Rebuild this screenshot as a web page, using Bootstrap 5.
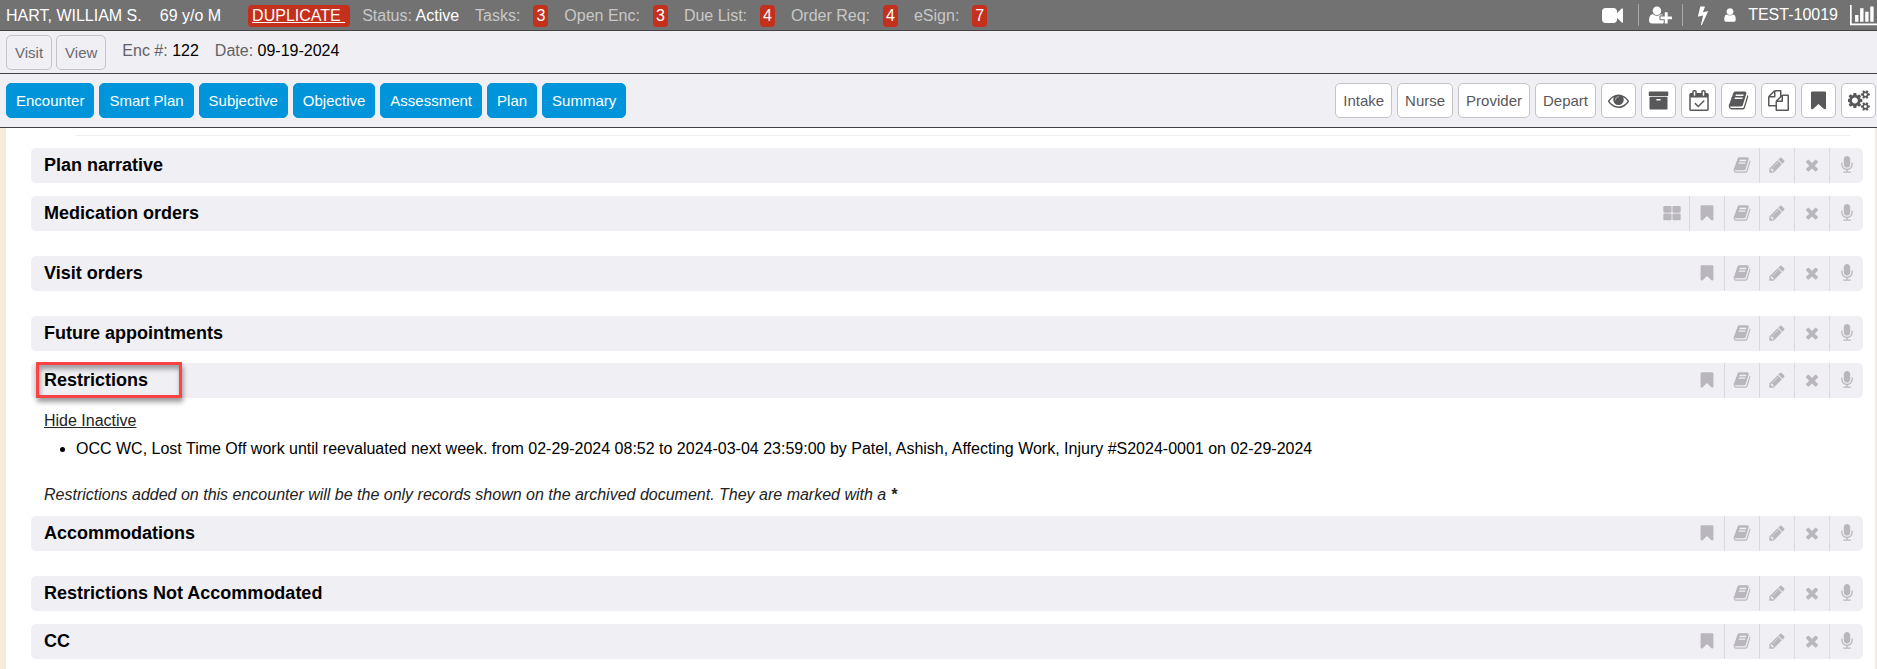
<!DOCTYPE html>
<html lang="en">
<head>
<meta charset="utf-8">
<meta name="viewport" content="width=device-width, initial-scale=1">
<title>Encounter – Plan</title>
<link href="https://cdn.jsdelivr.net/npm/bootstrap@5.3.0/dist/css/bootstrap.min.css" rel="stylesheet">
<style>
  body { font-family: "Liberation Sans", Arial, sans-serif; font-size: 16px; line-height: 22px; color: #000; background: #fff; }
  svg.fa { fill: currentColor; display: block; flex: none; }
  .s16 { height: 16px; } .s18 { height: 18px; } .s20 { height: 20px; } .s21 { height: 21px; } .s24 { height: 24px; }
  .patient-bar { background: #727272; color: #fff; height: 31px; border-bottom: 1px solid #434343; padding: 0 0 3px 6px; }
  .patient-bar .lbl { color: #c8c8c8; }
  .patient { gap: 18px; }
  .flag { background: #c3301c; color: #fff; border-radius: 4px; padding: 0 3px; }
  a.flag { padding: 0 5px 0 4px; margin-left: 9px; }
  a.flag:hover { color: #fff; }
  .counts { gap: 16px; margin-left: -6px; }
  .counts > span { display: flex; gap: 13px; }
  .tool { background: none; border: 0; color: #fff; padding: 0; }
  .split { width: 1px; height: 22px; background: #a8a8a8; margin: 0 10px 0 15px; }
  .split.flip { margin: 0 15px 0 10px; }
  .bar { background: #f0eff4; border-bottom: 1px solid #434343; }
  .visit-bar { height: 43px; padding: 4px 6px; }
  .visit-bar div { padding-top: 5px; }
  .tab-bar { min-height: 54px; padding: 9px 1px 9px 6px; gap: 5px; }
  .btn { font-size: 15px; line-height: 21px; height: 35px; border-radius: 5px; padding: 6px 8px; white-space: nowrap; }
  .btn-go { --bs-btn-color: #fff; --bs-btn-bg: #0095da; --bs-btn-border-color: #0095da; --bs-btn-hover-bg: #0082c0; --bs-btn-hover-color: #fff; padding: 6px 9px; }
  .btn-pale { --bs-btn-color: #58585a; --bs-btn-bg: #fff; --bs-btn-border-color: #c4c4c8; --bs-btn-hover-bg: #eee; padding: 4px 7px; }
  .btn-clear { --bs-btn-bg: transparent; padding: 5px 8px; color: #6a6a6e; }
  .btn-icon { width: 35px; padding: 0; display: flex; align-items: center; justify-content: center; }
  .muted { color: #626266; }
  .sheet { border-left: 6px solid #f5ecdc; border-right: 2px solid #f5ecdc; padding: 7px 12px 8px 25px; }
  .rule { height: 1px; background: #efeff1; margin: 0 13px 12px 45px; }
  .section-head { background: #f0eff4; border-radius: 5px; height: 35px; padding-left: 13px; margin-bottom: 13px; position: relative; }
  .section-head h2 { font-size: 18px; line-height: 20px; font-weight: 700; margin: 0 auto 2px 0; }
  .section-head button { width: 35px; height: 35px; border: 0; border-left: 1px solid #dad9dd; background: none; color: #b9b7bd; padding: 0 0 1px; display: flex; align-items: center; justify-content: center; }
  .section-head button:last-of-type { width: 34px; }
  .section-head h2 + button { border-left-color: transparent; }
  .gap-after { margin-bottom: 25px; }
  .tight { margin-bottom: 12px; }
  .highlight { position: absolute; left: 5px; top: -1px; width: 146px; height: 36px; border: 3px solid #ff4242; box-shadow: 1px 4px 5px rgba(0,0,0,.4), inset 1px 4px 5px rgba(0,0,0,.35); pointer-events: none; }
  .section-body { padding: 0 13px; margin-bottom: 10px; }
  .section-body a, .section-body em { color: #222; }
  .section-body ul { padding-left: 32px; margin: 6px 0 24px; }
</style>
</head>
<body class="d-flex flex-column min-vh-100">

<svg width="0" height="0" class="position-absolute" aria-hidden="true">
  <symbol id="video" viewBox="0 0 1792 1792"><path d="M1792 352v1088q0 42-39 59-13 5-25 5-27 0-45-19l-403-403v166q0 119-84.500 203.500t-203.500 84.500h-704q-119 0-203.500-84.500t-84.500-203.500v-704q0-119 84.500-203.500t203.500-84.500h704q119 0 203.500 84.500t84.500 203.500v165l403-402q18-19 45-19 12 0 25 5 39 17 39 59z"/></symbol>
  <symbol id="userplus" viewBox="0 0 2048 1792"><path d="M704 896q-159 0-271.500-112.500t-112.500-271.500 112.500-271.500 271.500-112.500 271.500 112.500 112.500 271.500-112.500 271.500-271.500 112.500zm960 128h352q13 0 22.500 9.500t9.500 22.500v192q0 13-9.500 22.500t-22.500 9.500h-352v352q0 13-9.500 22.500t-22.500 9.500h-192q-13 0-22.500-9.500t-9.500-22.500v-352h-352q-13 0-22.500-9.500t-9.500-22.500v-192q0-13 9.500-22.500t22.500-9.500h352v-352q0-13 9.500-22.500t22.500-9.500h192q13 0 22.500 9.500t9.500 22.500v352zm-736 224q0 52 38 90t90 38h256v238q-68 50-171 50h-874q-121 0-194-69t-73-190q0-53 3.500-103.500t14-109 26.500-108.500 43-97.500 62-81 85.500-53.500 111.500-20q19 0 39 17 79 61 154.500 91.500t164.500 30.500 164.500-30.500 154.500-91.500q20-17 39-17 132 0 217 96h-223q-52 0-90 38t-38 90v192z"/></symbol>
  <symbol id="bolt" viewBox="448 0 896 1792"><path d="M1333 566q18 20 7 44l-540 1157q-13 25-42 25-4 0-14-2-17-5-25.500-19t-4.500-30l197-808-406 101q-4 1-12 1-18 0-31-11-18-15-13-39l201-825q4-14 16-23t28-9h328q19 0 32 12.500t13 29.500q0 8-5 18l-171 463 396-98q8-2 12-2 19 0 34 15z"/></symbol>
  <symbol id="user" viewBox="256 0 1280 1792"><path d="M1536 1399q0 109-62.500 187t-150.500 78h-854q-88 0-150.500-78t-62.500-187q0-85 8.500-160.500t31.500-152 58.500-131 94-89 134.500-34.500q131 128 313 128t313-128q76 0 134.500 34.500t94 89 58.500 131 31.500 152 8.500 160.500zm-256-887q0 159-112.500 271.500t-271.500 112.500-271.500-112.500-112.500-271.500 112.500-271.500 271.500-112.500 271.500 112.500 112.500 271.500z"/></symbol>
  <symbol id="chart" viewBox="0 0 2048 1792"><path d="M640 896v512h-256v-512h256zm384-512v1024h-256v-1024h256zm1024 1152v128h-2048v-1536h128v1408h1920zm-640-896v768h-256v-768h256zm384-384v1152h-256v-1152h256z"/></symbol>
  <symbol id="eye" viewBox="0 0 1792 1792"><path d="M1664 960q-152-236-381-353 61 104 61 225 0 185-131.500 316.500t-316.500 131.500-316.500-131.500-131.500-316.500q0-121 61-225-229 117-381 353 133 205 333.500 326.500t434.500 121.500 434.500-121.500 333.500-326.500zm-720-384q0-20-14-34t-34-14q-125 0-214.500 89.500t-89.500 214.500q0 20 14 34t34 14 34-14 14-34q0-86 61-147t147-61q20 0 34-14t14-34zm848 384q0 34-20 69-140 230-376.500 368.500t-499.500 138.500-499.500-139-376.500-368q-20-35-20-69t20-69q140-229 376.500-368t499.500-139 499.500 139 376.500 368q20 35 20 69z"/><circle cx="896" cy="850" r="400" fill-opacity=".55"/></symbol>
  <symbol id="archive" viewBox="0 0 1792 1792"><path d="M1088 832q0-26-19-45t-45-19h-256q-26 0-45 19t-19 45 19 45 45 19h256q26 0 45-19t19-45zm576-192v960q0 26-19 45t-45 19h-1408q-26 0-45-19t-19-45v-960q0-26 19-45t45-19h1408q26 0 45 19t19 45zm64-448v256q0 26-19 45t-45 19h-1536q-26 0-45-19t-19-45v-256q0-26 19-45t45-19h1536q26 0 45 19t19 45z"/></symbol>
  <symbol id="calendar" viewBox="0 0 1664 1792"><path d="M1303 964l-512 512q-10 9-23 9t-23-9l-288-288q-9-10-9-23t9-22l46-46q9-9 22-9t23 9l220 220 444-444q10-9 23-9t22 9l46 46q9 9 9 22t-9 23zm-1175 700h1408v-1024h-1408v1024zm384-1216v-288q0-14-9-23t-23-9h-64q-14 0-23 9t-9 23v288q0 14 9 23t23 9h64q14 0 23-9t9-23zm768 0v-288q0-14-9-23t-23-9h-64q-14 0-23 9t-9 23v288q0 14 9 23t23 9h64q14 0 23-9t9-23zm384-64v1280q0 52-38 90t-90 38h-1408q-52 0-90-38t-38-90v-1280q0-52 38-90t90-38h128v-96q0-66 47-113t113-47h64q66 0 113 47t47 113v96h384v-96q0-66 47-113t113-47h64q66 0 113 47t47 113v96h128q52 0 90 38t38 90z"/></symbol>
  <symbol id="book" viewBox="0 0 1792 1792"><path d="M1703 478q40 57 18 129l-275 906q-19 64-76.500 107.500t-122.500 43.500h-923q-77 0-148.500-53.500t-99.500-131.500q-24-67-2-127 0-4 3-27t4-37q1-8-3-21.500t-3-19.500q2-11 8-21t16.500-23.500 16.500-23.500q23-38 45-91.500t30-91.500q3-10 .5-30t-.5-28q3-11 17-28t17-23q21-36 42-92t25-90q1-9-2.500-32t.5-28q4-13 22-30.500t22-22.500q19-26 42.500-84.500t27.500-96.500q1-8-3-25.500t-2-26.500q2-8 9-18t18-23 17-21q8-12 16.500-30.500t15-35 16-36 19.500-32 26.500-23.500 36-11.500 47.500 5.500l-1 3q38-9 51-9h761q74 0 114 56t18 130l-274 906q-36 119-71.500 153.500t-128.500 34.500h-869q-27 0-38 15-11 16-1 43 24 70 144 70h923q29 0 56-15.500t35-41.500l300-987q7-22 5-57 38 15 59 43zm-1064 2q-4 13 2 22.500t20 9.500h608q13 0 25.500-9.500t16.500-22.500l21-64q4-13-2-22.500t-20-9.500h-608q-13 0-25.500 9.500t-16.500 22.500zm-83 256q-4 13 2 22.500t20 9.500h608q13 0 25.500-9.500t16.500-22.500l21-64q4-13-2-22.500t-20-9.500h-608q-13 0-25.500 9.500t-16.500 22.500z"/></symbol>
  <symbol id="files" viewBox="0 0 1792 1792"><path d="M1696 384q40 0 68 28t28 68v1216q0 40-28 68t-68 28h-960q-40 0-68-28t-28-68v-288h-544q-40 0-68-28t-28-68v-672q0-40 20-88t48-76l408-408q28-28 76-48t88-20h416q40 0 68 28t28 68v328q68-40 128-40h416zm-544 213l-299 299h299v-299zm-640-384l-299 299h299v-299zm196 647l316-316v-416h-384v416q0 40-28 68t-68 28h-416v640h512v-256q0-40 20-88t48-76zm956 804v-1152h-384v416q0 40-28 68t-68 28h-416v640h896z"/></symbol>
  <symbol id="bookmark" viewBox="0 0 1792 1792"><path d="M1420 128q23 0 44 9 33 13 52.500 41t19.500 62v1289q0 34-19.500 62t-52.500 41q-19 8-44 8-48 0-83-32l-441-424-441 424q-36 33-83 33-23 0-44-9-33-13-52.500-41t-19.500-62v-1289q0-34 19.500-62t52.500-41q21-9 44-9h1048z"/></symbol>
  <symbol id="cogs" viewBox="0 0 1856 1792"><path d="M832 896q0-106-75-181t-181-75-181 75-75 181 75 181 181 75 181-75 75-181zm384-91v185q0 10-7 19.500t-16 10.500l-155 24q-11 35-32 76 34 48 90 115 7 11 7 20 0 12-7 19-23 30-82.500 89.500t-78.500 59.500q-11 0-21-7l-115-90q-37 19-77 31-11 108-23 155-7 24-30 24h-186q-11 0-20-7.500t-10-17.500l-23-153q-34-10-75-31l-118 89q-7 7-20 7-11 0-21-8-144-133-144-160 0-9 7-19 10-14 41-53t47-61q-23-44-35-82l-152-24q-10-1-17-9.500t-7-19.500v-185q0-10 7-19.500t16-10.500l155-24q11-35 32-76-34-48-90-115-7-11-7-20 0-12 7-20 22-30 82-89t79-59q11 0 21 7l115 90q34-18 77-32 11-108 23-154 7-24 30-24h186q11 0 20 7.500t10 17.500l23 153q34 10 75 31l118-89q8-7 20-7 11 0 21 8 144 133 144 160 0 8-7 19-12 16-42 54t-45 60q23 48 34 82l152 23q10 2 17 10.500t7 19.500z"/>
    <g id="cog-s"><path fill-rule="evenodd" d="M1856 1338v140q0 16-149 31-12 27-30 52 51 113 51 138 0 4-4 7-122 71-124 71-8 0-46-47t-52-68q-20 2-30 2t-30-2q-14 21-52 68t-46 47q-2 0-124-71-4-3-4-7 0-25 51-138-18-25-30-52-149-15-149-31v-140q0-16 149-31 13-29 30-52-51-113-51-138 0-4 4-7 4-2 35-20t59-34 30-16q8 0 46 46.500t52 67.500q20-2 30-2t30 2q51-71 92-112l6-2q4 0 124 70 4 3 4 7 0 25-51 138 17 23 30 52 149 15 149 31zM1600 1408q0-52-38-90t-90-38-90 38-38 90q0 53 37.500 90.500t90.500 37.500 90.500-37.500 37.500-90.500z"/></g><use href="#cog-s" y="-1024"/></symbol>
  <symbol id="grid4" viewBox="0 0 1792 1792"><rect x="32" y="200" width="820" height="660" rx="128"/><rect x="940" y="200" width="820" height="660" rx="128"/><rect x="32" y="950" width="820" height="660" rx="128"/><rect x="940" y="950" width="820" height="660" rx="128"/></symbol>
  <symbol id="pencil" viewBox="0 0 1792 1792"><path d="M491 1536l91-91-235-235-91 91v107h128v128h107zm523-928q0-22-22-22-10 0-17 7l-542 542q-7 7-7 17 0 22 22 22 10 0 17-7l542-542q7-7 7-17zm-54-192l416 416-832 832h-416v-416zm683 96q0 53-37 90l-166 166-416-416 166-165q36-38 90-38 53 0 91 38l235 234q37 39 37 91z"/></symbol>
  <symbol id="times" viewBox="0 0 1792 1792"><path d="M1490 1322q0 40-28 68l-136 136q-28 28-68 28t-68-28l-294-294-294 294q-28 28-68 28t-68-28l-136-136q-28-28-28-68t28-68l294-294-294-294q-28-28-28-68t28-68l136-136q28-28 68-28t68 28l294 294 294-294q28-28 68-28t68 28l136 136q28 28 28 68t-28 68l-294 294 294 294q28 28 28 68z"/></symbol>
  <symbol id="mic" viewBox="0 0 1792 1792"><path d="M1472 704v128q0 221-147.500 384.500t-364.500 187.500v132h256q26 0 45 19t19 45-19 45-45 19h-640q-26 0-45-19t-19-45 19-45 45-19h256v-132q-217-24-364.500-187.500t-147.500-384.500v-128q0-26 19-45t45-19 45 19 19 45v128q0 185 131.500 316.500t316.500 131.500 316.500-131.500 131.500-316.500v-128q0-26 19-45t45-19 45 19 19 45zm-256-384v512q0 132-94 226t-226 94-226-94-94-226v-512q0-132 94-226t226-94 226 94 94 226z"/></symbol>
</svg>

<header>
  <div class="patient-bar d-flex align-items-end justify-content-between text-nowrap">
    <div class="patient d-flex">
      <span>HART, WILLIAM S.</span>
      <span>69 y/o M</span>
      <a href="#" class="flag">DUPLICATE&nbsp;</a>
      <div class="counts d-flex">
        <div><span class="lbl">Status:</span> Active</div>
        <span><span class="lbl">Tasks:</span><span class="flag">3</span></span>
        <span><span class="lbl">Open Enc:</span><span class="flag">3</span></span>
        <span><span class="lbl">Due List:</span><span class="flag">4</span></span>
        <span><span class="lbl">Order Req:</span><span class="flag">4</span></span>
        <span><span class="lbl">eSign:</span><span class="flag">7</span></span>
      </div>
    </div>
    <div class="d-flex align-items-center">
      <button class="tool" aria-label="Video visit"><svg class="fa s21" width="21"><use href="#video"/></svg></button>
      <span class="split"></span>
      <button class="tool" aria-label="Add patient"><svg class="fa s20" width="23"><use href="#userplus"/></svg></button>
      <span class="split flip"></span>
      <button class="tool" aria-label="Quick actions"><svg class="fa s20" width="10"><use href="#bolt"/></svg></button>
      <svg class="fa s16 ms-3" width="12"><use href="#user"/></svg>
      <span class="ms-2 ps-1 pe-1">TEST-10019</span>
      <button class="tool ms-2" aria-label="Reports"><svg class="fa s24" width="27"><use href="#chart"/></svg></button>
    </div>
  </div>
  <div class="bar visit-bar d-flex">
    <button class="btn btn-pale btn-clear">Visit</button>
    <button class="btn btn-pale btn-clear ms-1">View</button>
    <div class="ms-3"><span class="muted">Enc #:</span> 122</div>
    <div class="ms-3"><span class="muted">Date:</span> 09-19-2024</div>
  </div>
  <nav class="bar tab-bar d-flex">
    <button class="btn btn-go">Encounter</button>
    <button class="btn btn-go">Smart Plan</button>
    <button class="btn btn-go">Subjective</button>
    <button class="btn btn-go">Objective</button>
    <button class="btn btn-go">Assessment</button>
    <button class="btn btn-go">Plan</button>
    <button class="btn btn-go">Summary</button>
    <button class="btn btn-pale ms-auto">Intake</button>
    <button class="btn btn-pale">Nurse</button>
    <button class="btn btn-pale">Provider</button>
    <button class="btn btn-pale">Depart</button>
    <button class="btn btn-pale btn-icon" aria-label="Preview"><svg class="fa s21" width="21"><use href="#eye"/></svg></button>
    <button class="btn btn-pale btn-icon" aria-label="Archive"><svg class="fa s21" width="21"><use href="#archive"/></svg></button>
    <button class="btn btn-pale btn-icon" aria-label="Schedule"><svg class="fa s21" width="20"><use href="#calendar"/></svg></button>
    <button class="btn btn-pale btn-icon" aria-label="Reference"><svg class="fa s21" width="21"><use href="#book"/></svg></button>
    <button class="btn btn-pale btn-icon" aria-label="Copy"><svg class="fa s21" width="21"><use href="#files"/></svg></button>
    <button class="btn btn-pale btn-icon" aria-label="Bookmark"><svg class="fa s21" width="21"><use href="#bookmark"/></svg></button>
    <button class="btn btn-pale btn-icon" aria-label="Settings"><svg class="fa s21" width="22"><use href="#cogs"/></svg></button>
  </nav>
</header>

<main class="sheet flex-grow-1">
  <div class="rule"></div>

  <div class="section-head d-flex align-items-center">
    <h2>Plan narrative</h2>
    <button aria-label="Reference"><svg class="fa s18" width="18"><use href="#book"/></svg></button>
    <button aria-label="Edit"><svg class="fa s18" width="18"><use href="#pencil"/></svg></button>
    <button aria-label="Clear"><svg class="fa s18" width="18"><use href="#times"/></svg></button>
    <button aria-label="Dictate"><svg class="fa s18" width="18"><use href="#mic"/></svg></button>
  </div>

  <div class="section-head gap-after d-flex align-items-center">
    <h2>Medication orders</h2>
    <button aria-label="Grid"><svg class="fa s18" width="18"><use href="#grid4"/></svg></button>
    <button aria-label="Bookmark"><svg class="fa s18" width="18"><use href="#bookmark"/></svg></button>
    <button aria-label="Reference"><svg class="fa s18" width="18"><use href="#book"/></svg></button>
    <button aria-label="Edit"><svg class="fa s18" width="18"><use href="#pencil"/></svg></button>
    <button aria-label="Clear"><svg class="fa s18" width="18"><use href="#times"/></svg></button>
    <button aria-label="Dictate"><svg class="fa s18" width="18"><use href="#mic"/></svg></button>
  </div>

  <div class="section-head gap-after d-flex align-items-center">
    <h2>Visit orders</h2>
    <button aria-label="Bookmark"><svg class="fa s18" width="18"><use href="#bookmark"/></svg></button>
    <button aria-label="Reference"><svg class="fa s18" width="18"><use href="#book"/></svg></button>
    <button aria-label="Edit"><svg class="fa s18" width="18"><use href="#pencil"/></svg></button>
    <button aria-label="Clear"><svg class="fa s18" width="18"><use href="#times"/></svg></button>
    <button aria-label="Dictate"><svg class="fa s18" width="18"><use href="#mic"/></svg></button>
  </div>

  <div class="section-head tight d-flex align-items-center">
    <h2>Future appointments</h2>
    <button aria-label="Reference"><svg class="fa s18" width="18"><use href="#book"/></svg></button>
    <button aria-label="Edit"><svg class="fa s18" width="18"><use href="#pencil"/></svg></button>
    <button aria-label="Clear"><svg class="fa s18" width="18"><use href="#times"/></svg></button>
    <button aria-label="Dictate"><svg class="fa s18" width="18"><use href="#mic"/></svg></button>
  </div>

  <div class="section-head tight d-flex align-items-center">
    <h2>Restrictions</h2>
    <button aria-label="Bookmark"><svg class="fa s18" width="18"><use href="#bookmark"/></svg></button>
    <button aria-label="Reference"><svg class="fa s18" width="18"><use href="#book"/></svg></button>
    <button aria-label="Edit"><svg class="fa s18" width="18"><use href="#pencil"/></svg></button>
    <button aria-label="Clear"><svg class="fa s18" width="18"><use href="#times"/></svg></button>
    <button aria-label="Dictate"><svg class="fa s18" width="18"><use href="#mic"/></svg></button>
    <span class="highlight"></span>
  </div>
  <div class="section-body">
    <a href="#">Hide Inactive</a>
    <ul>
      <li>OCC WC, Lost Time Off work until reevaluated next week. from 02-29-2024 08:52 to 2024-03-04 23:59:00 by Patel, Ashish, Affecting Work, Injury #S2024-0001 on 02-29-2024</li>
    </ul>
    <em>Restrictions added on this encounter will be the only records shown on the archived document. They are marked with a <b>*</b></em>
  </div>

  <div class="section-head gap-after d-flex align-items-center">
    <h2>Accommodations</h2>
    <button aria-label="Bookmark"><svg class="fa s18" width="18"><use href="#bookmark"/></svg></button>
    <button aria-label="Reference"><svg class="fa s18" width="18"><use href="#book"/></svg></button>
    <button aria-label="Edit"><svg class="fa s18" width="18"><use href="#pencil"/></svg></button>
    <button aria-label="Clear"><svg class="fa s18" width="18"><use href="#times"/></svg></button>
    <button aria-label="Dictate"><svg class="fa s18" width="18"><use href="#mic"/></svg></button>
  </div>

  <div class="section-head d-flex align-items-center">
    <h2>Restrictions Not Accommodated</h2>
    <button aria-label="Reference"><svg class="fa s18" width="18"><use href="#book"/></svg></button>
    <button aria-label="Edit"><svg class="fa s18" width="18"><use href="#pencil"/></svg></button>
    <button aria-label="Clear"><svg class="fa s18" width="18"><use href="#times"/></svg></button>
    <button aria-label="Dictate"><svg class="fa s18" width="18"><use href="#mic"/></svg></button>
  </div>

  <div class="section-head mb-0 d-flex align-items-center">
    <h2>CC</h2>
    <button aria-label="Bookmark"><svg class="fa s18" width="18"><use href="#bookmark"/></svg></button>
    <button aria-label="Reference"><svg class="fa s18" width="18"><use href="#book"/></svg></button>
    <button aria-label="Edit"><svg class="fa s18" width="18"><use href="#pencil"/></svg></button>
    <button aria-label="Clear"><svg class="fa s18" width="18"><use href="#times"/></svg></button>
    <button aria-label="Dictate"><svg class="fa s18" width="18"><use href="#mic"/></svg></button>
  </div>
</main>

<script src="https://cdn.jsdelivr.net/npm/bootstrap@5.3.0/dist/js/bootstrap.bundle.min.js"></script>
</body>
</html>
